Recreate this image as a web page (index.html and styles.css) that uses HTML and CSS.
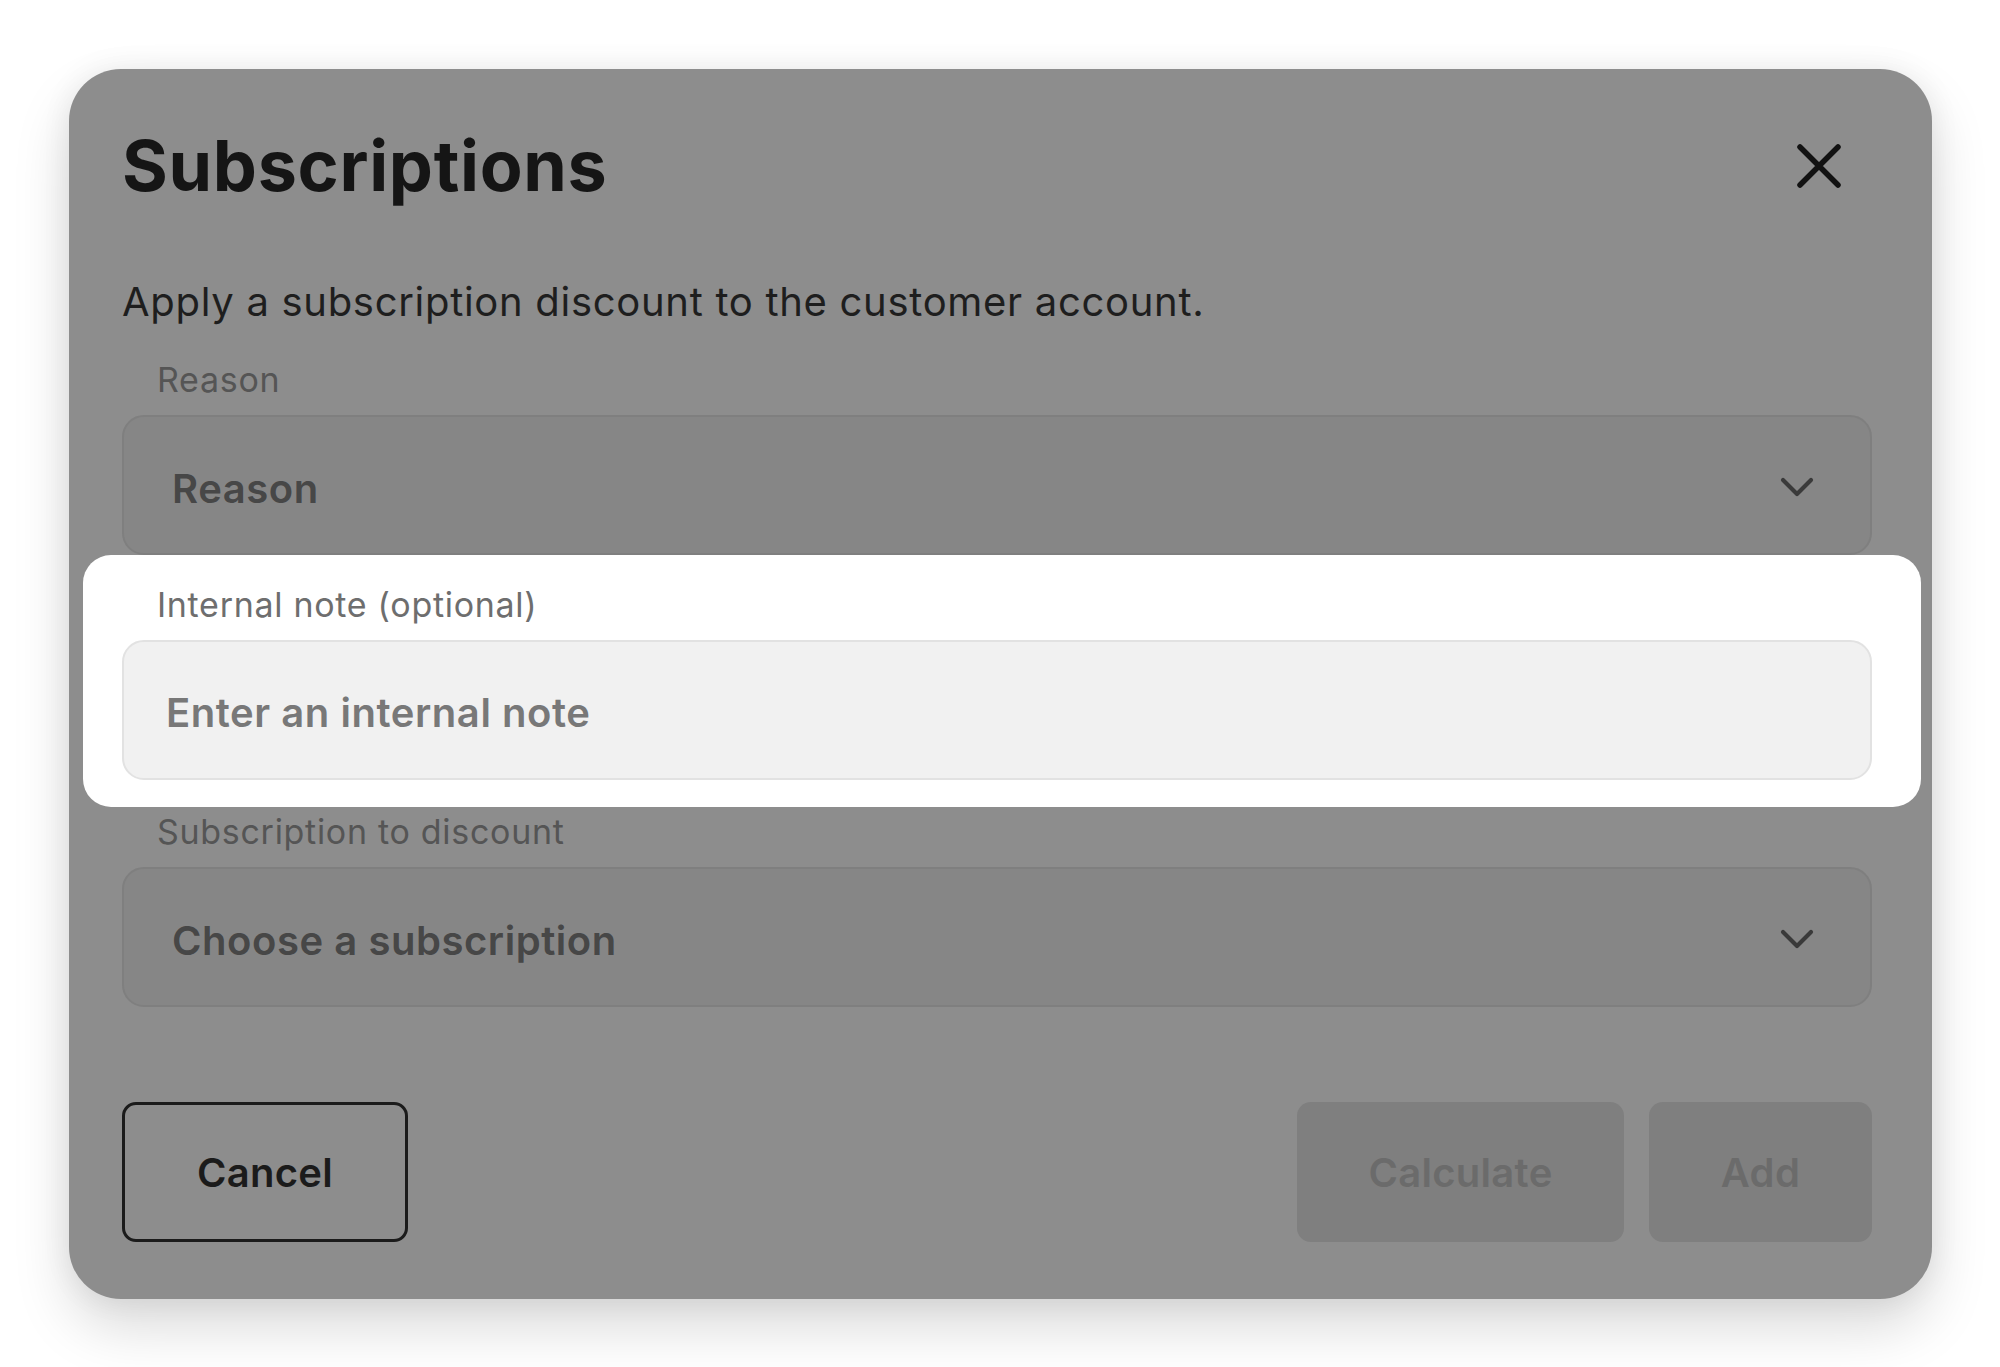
FILE: index.html
```html
<!DOCTYPE html>
<html lang="en">
<head>
<meta charset="utf-8">
<title>Subscriptions</title>
<link rel="stylesheet" href="styles.css">
</head>
<body>
<div class="modal">
  <div class="header">
    <h1 class="title">Subscriptions</h1>
    <button class="close" aria-label="Close">
      <svg width="46" height="46" viewBox="0 0 46 46"><path d="M4 4 L42 42 M42 4 L4 42" stroke="#121212" stroke-width="5.5" stroke-linecap="round" fill="none"/></svg>
    </button>
  </div>
  <p class="desc">Apply a subscription discount to the customer account.</p>

  <div class="field">
    <label class="label">Reason</label>
    <div class="select">
      <span class="select-text">Reason</span>
      <svg class="chev" width="34" height="22" viewBox="0 0 34 22"><path d="M3 4 L17 18 L31 4" stroke="#3a3a3a" stroke-width="4.2" stroke-linecap="round" stroke-linejoin="round" fill="none"/></svg>
    </div>
  </div>

  <div class="field spot">
    <label class="label label-light">Internal note (optional)</label>
    <div class="input"><span class="input-text">Enter an internal note</span></div>
  </div>

  <div class="field field-last">
    <label class="label">Subscription to discount</label>
    <div class="select">
      <span class="select-text">Choose a subscription</span>
      <svg class="chev" width="34" height="22" viewBox="0 0 34 22"><path d="M3 4 L17 18 L31 4" stroke="#3a3a3a" stroke-width="4.2" stroke-linecap="round" stroke-linejoin="round" fill="none"/></svg>
    </div>
  </div>

  <div class="actions">
    <button class="btn btn-outline">Cancel</button>
    <div class="right">
      <button class="btn btn-disabled btn-calc">Calculate</button>
      <button class="btn btn-disabled btn-add">Add</button>
    </div>
  </div>
</div>
</body>
</html>
```
FILE: styles.css
```css
* { box-sizing: border-box; }
html, body { margin: 0; padding: 0; }
body {
  background: #ffffff;
  font-family: "Inter", "Noto Sans", sans-serif;
  width: 2000px;
  height: 1367px;
  overflow: hidden;
}
.modal {
  margin: 69px 0 0 69px;
  width: 1863px;
  background: #8d8d8d;
  border-radius: 52px;
  padding: 55px 60px 57px 53px;
  display: flex;
  flex-direction: column;
  box-shadow: 0 28px 56px rgba(0,0,0,0.15), 0 0 30px rgba(0,0,0,0.07);
}
.header {
  display: flex;
  align-items: center;
  justify-content: space-between;
  height: 84px;
}
.title {
  margin: 0;
  font-size: 70px;
  line-height: 84px;
  font-weight: 700;
  color: #151515;
  letter-spacing: 0.7px;
}
.close {
  background: none;
  border: 0;
  padding: 0;
  width: 46px;
  height: 46px;
  margin-right: 30px;
  display: flex;
}
.desc {
  margin: 66px 0 0 0;
  font-size: 40px;
  line-height: 56px;
  color: #1e1e1e;
  letter-spacing: 0.7px;
}
.field {
  display: flex;
  flex-direction: column;
  margin-top: 30px;
}
.label {
  font-size: 34px;
  line-height: 40px;
  color: #555555;
  padding-left: 35px;
  margin-bottom: 15px;
  letter-spacing: 0.7px;
}
.select {
  height: 140px;
  border: 2px solid #7f7f7f;
  background: #868686;
  border-radius: 22px;
  display: flex;
  align-items: center;
  justify-content: space-between;
  padding: 0 56px 0 48px;
}
.select-text {
  font-size: 40px;
  font-weight: 600;
  color: #474747;
  letter-spacing: 0.55px;
  padding-top: 6px;
}
.chev { display: block; margin-top: 4px; }
.spot {
  background: #ffffff;
  border-radius: 28px;
  margin: 0 -49px -27px -39px;
  padding: 30px 49px 27px 39px;
  position: relative;
}
.field-last { margin-top: 32px; }
.label-light { color: #6e6e6e; }
.input {
  height: 140px;
  border: 2px solid #e2e2e2;
  background: #f1f1f1;
  border-radius: 22px;
  display: flex;
  align-items: center;
  padding-left: 42px;
}
.input-text {
  font-size: 40px;
  font-weight: 600;
  color: #787878;
  letter-spacing: 0.55px;
  padding-top: 5px;
}
.actions {
  margin-top: 95px;
  display: flex;
  justify-content: space-between;
}
.right {
  display: flex;
  gap: 25px;
}
.btn {
  height: 140px;
  font-family: "Inter", "Noto Sans", sans-serif;
  font-size: 40px;
  font-weight: 600;
  border-radius: 14px;
  padding: 0;
  letter-spacing: 0.3px;
}
.btn-outline {
  width: 286px;
  background: transparent;
  border: 3px solid #1b1b1b;
  color: #1b1b1b;
}
.btn-disabled {
  background: #7f7f7f;
  border: 0;
  color: #6b6b6b;
}
.btn-calc { width: 327px; }
.btn-add { width: 223px; }
```
